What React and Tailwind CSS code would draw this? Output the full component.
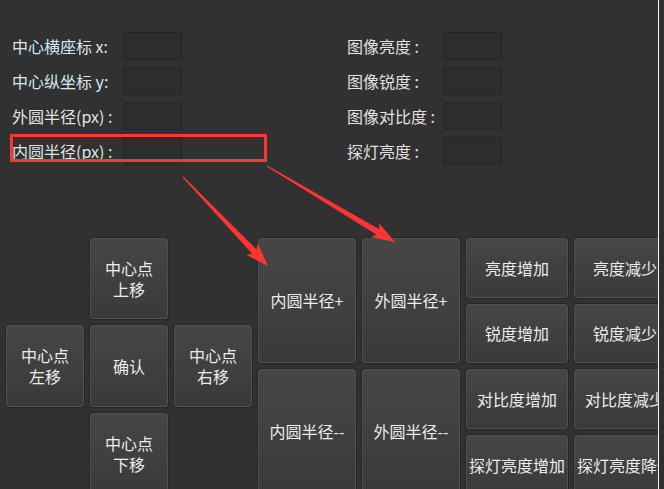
import React from "react";

const FONT = { fontFamily: '"Noto Sans CJK SC", "Noto Sans", sans-serif' };

function Btn({ children, className = "" }) {
  return (
    <div
      className={
        "flex shrink-0 items-center justify-center text-center whitespace-nowrap rounded-[3px] border border-[#505050] bg-linear-to-b from-[#464646] to-[#3a3a3a] text-[#ececec] text-[16px] leading-[21px] shadow-[0_0_0_1px_#272727] " +
        className
      }
    >
      {children}
    </div>
  );
}

function Field({ label, labelW, tint }) {
  return (
    <div className="flex h-[28px] items-center">
      <div
        className={"text-[16px] leading-none whitespace-nowrap " + (tint ? "text-[#d6e6f4]" : "text-[#e2e2e2]")}
        style={{ width: labelW }}
      >
        {label}
      </div>
      <div className="h-[28px] w-[59px] rounded-[3px] border border-[#242424] bg-[#2d2d2d]" />
    </div>
  );
}

function arrow(tx, ty, px, py) {
  const dx = px - tx, dy = py - ty;
  const len = Math.hypot(dx, dy);
  const ux = dx / len, uy = dy / len;
  const nx = -uy, ny = ux;
  const L = 20, H = 8, w0 = 0.6, w1 = 3;
  const bx = px - ux * L, by = py - uy * L;
  const cx = px - ux * (L + 3), cy = py - uy * (L + 3);
  const p = [
    [tx + nx * w0, ty + ny * w0],
    [bx + nx * w1, by + ny * w1],
    [cx + nx * H, cy + ny * H],
    [px, py],
    [cx - nx * H, cy - ny * H],
    [bx - nx * w1, by - ny * w1],
    [tx - nx * w0, ty - ny * w0],
  ];
  return p.map((q) => q[0].toFixed(1) + "," + q[1].toFixed(1)).join(" ");
}

export default function App() {
  return (
    <div className="relative flex h-[489px] w-[664px] overflow-hidden bg-[#313131]" style={FONT}>
      <div className="flex h-full w-[658px] shrink-0 flex-col overflow-hidden">
        <div className="flex pt-[32px]">
          <div className="flex w-[347px] shrink-0 flex-col gap-[7px] pl-[12px]">
            <Field label="中心横座标 x:" labelW={111} tint />
            <Field label="中心纵坐标 y:" labelW={111} tint />
            <Field label="外圆半径(px) :" labelW={111} />
            <Field label="内圆半径(px) :" labelW={111} />
          </div>
          <div className="flex flex-col gap-[7px]">
            <Field label="图像亮度 :" labelW={96} />
            <Field label="图像锐度 :" labelW={96} />
            <Field label="图像对比度 :" labelW={96} />
            <Field label="探灯亮度 :" labelW={96} />
          </div>
        </div>

        <div className="mt-[73px] flex gap-[6px] pl-[6px]">
          <div className="grid shrink-0 grid-cols-[78px_78px_78px] grid-rows-[81px_82px_81px] gap-[6px]">
            <div />
            <Btn>中心点<br />上移</Btn>
            <div />
            <Btn>中心点<br />左移</Btn>
            <Btn>确认</Btn>
            <Btn>中心点<br />右移</Btn>
            <div />
            <Btn>中心点<br />下移</Btn>
            <div />
          </div>
          <div className="grid shrink-0 grid-cols-[98px_98px] grid-rows-[125px_125px] gap-[6px]">
            <Btn>内圆半径+</Btn>
            <Btn>外圆半径+</Btn>
            <Btn>内圆半径--</Btn>
            <Btn>外圆半径--</Btn>
          </div>
          <div className="grid shrink-0 grid-cols-[102px_102px] grid-rows-[60px_59px_60px_60px] gap-[6px]">
            <Btn>亮度增加</Btn>
            <Btn>亮度减少</Btn>
            <Btn>锐度增加</Btn>
            <Btn>锐度减少</Btn>
            <Btn>对比度增加</Btn>
            <Btn>对比度减少</Btn>
            <Btn>探灯亮度增加</Btn>
            <Btn>探灯亮度降低</Btn>
          </div>
        </div>
      </div>
      <div className="h-full w-px shrink-0 bg-[#f4f4f4]" />
      <div className="h-full flex-1 bg-[#2f2f2f]" />

      <div className="pointer-events-none absolute left-[10px] top-[134px] h-[28px] w-[257px] border-[3px] border-[#ff3434]" />
      <svg className="pointer-events-none absolute left-0 top-0" width="664" height="489">
        <polygon points={arrow(183, 177, 268, 266)} fill="#ff3434" />
        <polygon points={arrow(267, 166, 395, 242)} fill="#ff3434" />
      </svg>
    </div>
  );
}
